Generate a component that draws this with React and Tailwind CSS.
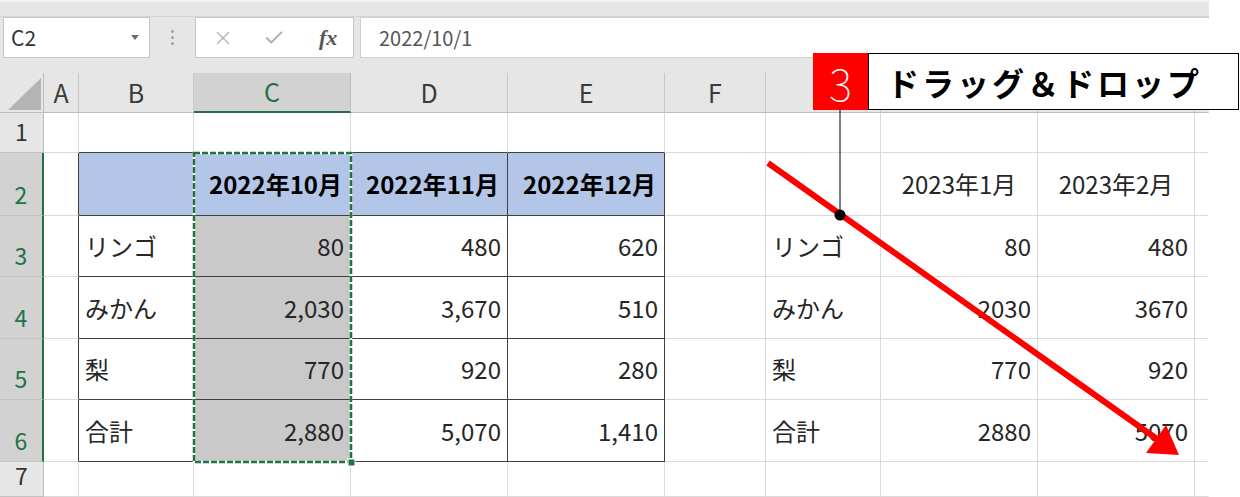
import React from 'react';
import { X, Check } from 'lucide-react';

// column letters; G, H and I sit under the callout so they are left empty
const COLS = ['', 'A', 'B', 'C', 'D', 'E', 'F', 'G', 'H', 'I', ''];
const HIDDEN = { 7: true, 8: true, 9: true };

const DATA = {
  2: { 3: '2022年10月', 4: '2022年11月', 5: '2022年12月', 8: '2023年1月', 9: '2023年2月' },
  3: { 2: 'リンゴ', 3: '80', 4: '480', 5: '620', 7: 'リンゴ', 8: '80', 9: '480' },
  4: { 2: 'みかん', 3: '2,030', 4: '3,670', 5: '510', 7: 'みかん', 8: '2030', 9: '3670' },
  5: { 2: '梨', 3: '770', 4: '920', 5: '280', 7: '梨', 8: '770', 9: '920' },
  6: { 2: '合計', 3: '2,880', 4: '5,070', 5: '1,410', 7: '合計', 8: '2880', 9: '5070' },
};

function cellClass(r, c) {
  const right =
    r >= 2 && r <= 6 && c >= 1 && c <= 5
      ? 'border-r-[#3f3f3f]'
      : c === 10
      ? 'border-r-white'
      : 'border-r-[#dadada]';
  const bottom = r >= 1 && r <= 6 && c >= 2 && c <= 5 ? 'border-b-[#3f3f3f]' : 'border-b-[#dadada]';
  let bg = 'bg-white';
  if (r === 2 && c >= 2 && c <= 5) bg = 'bg-[#b4c6e7]';
  else if (c === 3 && r >= 3 && r <= 6) bg = 'bg-[#c9c9c9]';

  let align = 'justify-end pr-[6px]';
  if (r === 2 && c >= 3 && c <= 5) align = 'justify-end pr-[8px] font-bold text-black';
  else if (r === 2) align = 'justify-center';
  else if (c === 2 || c === 7) align = 'justify-start pl-[6px]';

  return `flex items-center border-r border-b ${right} ${bottom} ${bg} ${align}`;
}

function HeaderCell({ c }) {
  if (c === 0) {
    return (
      <div className="relative bg-[#e6e6e6] border-r border-b border-r-[#bdbdbd] border-b-[#bdbdbd]">
        <svg width="44" height="40" className="block">
          <polygon points="8,37 41,37 41,5" fill="#b4b4b4" />
        </svg>
      </div>
    );
  }
  if (c === 3) {
    return (
      <div className="flex items-center justify-center bg-[#d2d2d2] border-r border-b-2 border-r-[#bdbdbd] border-b-[#217346] text-[#217346] text-[25px]">
        C
      </div>
    );
  }
  return (
    <div
      className={`flex items-center justify-center bg-[#e6e6e6] border-r border-b border-b-[#bdbdbd] text-[#3a3a3a] text-[25px] ${
        c === 10 ? 'border-r-[#e6e6e6]' : 'border-r-[#c8c8c8]'
      }`}
    >
      {HIDDEN[c] ? null : COLS[c]}
    </div>
  );
}

function RowHeader({ r }) {
  const sel = r >= 2 && r <= 6;
  return (
    <div
      className={
        sel
          ? 'flex items-end justify-center pb-[9px] leading-none bg-[#d2d2d2] border-r-2 border-b border-r-[#217346] border-b-[#c2c2c2] text-[#217346] text-[23px]'
          : 'flex items-end justify-center pb-[9px] leading-none bg-[#e6e6e6] border-r border-b border-r-[#bdbdbd] border-b-[#c2c2c2] text-[#333] text-[23px]'
      }
    >
      {r}
    </div>
  );
}

export default function App() {
  const rows = [1, 2, 3, 4, 5, 6, 7];
  return (
    <div className="relative w-[1240px] h-[497px] overflow-hidden bg-white font-['Noto_Sans_CJK_JP',sans-serif] text-[#262626]">
      <div className="w-[1209px]">
        {/* formula bar */}
        <div className="h-[73px] bg-[#e6e6e6]">
          <div className="h-[17px] border-t-2 border-t-[#f2f2f2] border-b border-b-[#d6d6d6]" />
          <div className="flex h-[41px] pl-[3px]">
            <div className="flex w-[147px] items-center justify-between bg-white border border-[#c6c6c6] pl-[7px] pr-[10px] text-[21px] text-[#333]">
              <span>C2</span>
              <svg width="8" height="5" viewBox="0 0 8 5">
                <polygon points="0,0 8,0 4,5" fill="#6d6d6d" />
              </svg>
            </div>
            <div className="flex w-[45px] flex-col items-center justify-center gap-[3px]">
              <span className="w-[3px] h-[3px] rounded-full bg-[#a0a0a0]" />
              <span className="w-[3px] h-[3px] rounded-full bg-[#a0a0a0]" />
              <span className="w-[3px] h-[3px] rounded-full bg-[#a0a0a0]" />
            </div>
            <div className="flex w-[159px] items-center bg-white border border-[#c6c6c6] pl-[16px]">
              <X size={22} strokeWidth={1.5} className="text-[#b3b3b3]" />
              <Check size={22} strokeWidth={2.2} className="ml-[29px] text-[#b3b3b3]" />
              <span className="ml-[34px] font-['Liberation_Serif',serif] italic font-bold text-[22px] text-[#555]">fx</span>
            </div>
            <div className="ml-[6px] flex flex-1 items-center bg-white border-y border-l border-[#d0d0d0] pl-[18px] text-[20px] text-[#555]">
              2022/10/1
            </div>
          </div>
        </div>

        {/* sheet */}
        <div className="grid grid-cols-[44px_35px_115px_157px_157px_157px_101px_115px_157px_157px_14px] grid-rows-[40px_40px_63px_61px_62px_61px_62px_35px] text-[24px]">
          {COLS.map((_, c) => (
            <HeaderCell key={'h' + c} c={c} />
          ))}
          {rows.map((r) =>
            COLS.map((_, c) =>
              c === 0 ? (
                <RowHeader key={r + '-' + c} r={r} />
              ) : (
                <div key={r + '-' + c} className={cellClass(r, c)}>
                  {DATA[r] && DATA[r][c]}
                </div>
              )
            )
          )}
        </div>
      </div>

      {/* selection, arrow and leader line */}
      <svg width="1240" height="497" className="absolute inset-0 pointer-events-none">
        <rect x="194" y="153" width="157" height="309" fill="none" stroke="#ffffff" strokeWidth="2.5" />
        <rect x="194" y="153" width="157" height="309" fill="none" stroke="#217346" strokeWidth="2.5" strokeDasharray="6 2" />
        <rect x="348" y="459" width="7" height="7" fill="#217346" stroke="#ffffff" strokeWidth="1" />
        <line x1="768" y1="163" x2="1157" y2="439" stroke="#ff0000" strokeWidth="6" />
        <polygon points="1179,455 1146,453 1166,425" fill="#ff0000" />
        <line x1="840" y1="110" x2="840" y2="215" stroke="#000" strokeWidth="1" />
        <circle cx="840" cy="215" r="5.5" fill="#000" />
      </svg>

      {/* callout */}
      <div className="absolute left-[813px] top-[53px] flex h-[57px]">
        <div className="flex w-[55px] items-center justify-center bg-[#ff0000] text-white text-[44px] font-thin leading-none">
          3
        </div>
        <div className="flex w-[371px] items-center bg-white border border-black pl-[18px] text-[32px] font-bold tracking-[3px] text-black">
          ドラッグ＆ドロップ
        </div>
      </div>
    </div>
  );
}
